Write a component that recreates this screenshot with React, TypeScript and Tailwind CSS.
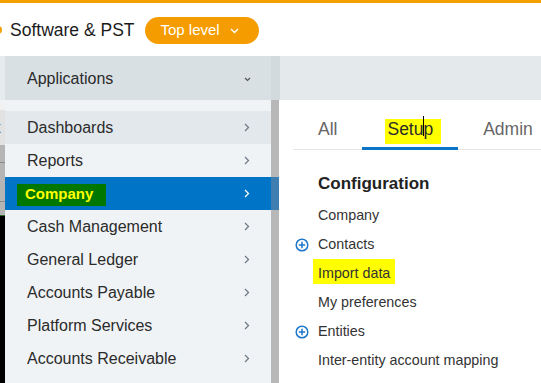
import React from "react";

const Chevron = ({ color = "#6f7b88" }: { color?: string }) => (
  <svg width="6" height="9" viewBox="0 0 6 9" className="block">
    <polyline points="1,1 4.5,4.5 1,8" fill="none" stroke={color} strokeWidth="1.3" />
  </svg>
);

const PlusCircle = () => (
  <svg width="14" height="14" viewBox="0 0 14 14" className="block">
    <circle cx="7" cy="7" r="5.8" fill="none" stroke="#1e76c8" strokeWidth="1.5" />
    <line x1="7" y1="3.8" x2="7" y2="10.2" stroke="#1e76c8" strokeWidth="1.5" />
    <line x1="3.8" y1="7" x2="10.2" y2="7" stroke="#1e76c8" strokeWidth="1.5" />
  </svg>
);

const menu = [
  "Dashboards",
  "Reports",
  "Company",
  "Cash Management",
  "General Ledger",
  "Accounts Payable",
  "Platform Services",
  "Accounts Receivable",
];

const items: { label: string; plus?: boolean; hl?: boolean }[] = [
  { label: "Company" },
  { label: "Contacts", plus: true },
  { label: "Import data", hl: true },
  { label: "My preferences" },
  { label: "Entities", plus: true },
  { label: "Inter-entity account mapping" },
];

export default function App() {
  return (
    <div
      className="w-[541px] h-[383px] overflow-hidden bg-white flex flex-col"
      style={{ fontFamily: '"Liberation Sans", Arial, sans-serif' }}
    >
      <div className="h-[3px] bg-[#f5a000] shrink-0" />
      {/* header */}
      <div className="h-[53px] shrink-0 flex items-center relative pt-[2px]">
        <div className="absolute left-[-6px] top-[23px] w-[8px] h-[8px] rounded-full bg-[#f5a000]" />
        <span className="ml-[10px] text-[17.5px] text-[#1b1b1b] leading-none">Software &amp; PST</span>
        <div className="ml-[10px] h-[27px] w-[114px] shrink-0 rounded-full bg-[#f59c00] flex items-center pl-[16px] text-white text-[15px]">
          <span>Top level</span>
          <svg width="9" height="6" viewBox="0 0 9 6" className="ml-[10px] block">
            <polyline points="1,1 4.5,4.5 8,1" fill="none" stroke="#fff" strokeWidth="1.4" />
          </svg>
        </div>
      </div>
      {/* band */}
      <div className="h-[44px] shrink-0 flex">
        <div className="w-[5px] shrink-0 bg-[#e6ebee]" />
        <div className="w-[266px] shrink-0 bg-[#d9e0e4] flex items-center justify-between pl-[22px] pr-[20px] pt-[2px]">
          <span className="text-[16px] text-[#2a2a2a]">Applications</span>
          <svg width="7" height="5" viewBox="0 0 7 5" className="block">
            <polyline points="1,1 3.5,3.5 6,1" fill="none" stroke="#555" strokeWidth="1.2" />
          </svg>
        </div>
        <div className="w-[9px] shrink-0 bg-[#d3dadd]" />
        <div className="flex-1 bg-[#e4e9ec]" />
      </div>
      {/* main */}
      <div className="flex-1 flex min-h-0">
        <div className="w-[5px] shrink-0 flex flex-col">
          <div className="h-[10px] bg-[#eff1f2]" />
          <div className="h-[35px] bg-[#e2e2e2] relative overflow-hidden">
            <span className="absolute left-[-4px] top-[10px] text-[16px] leading-none text-black">t</span>
          </div>
          <div className="h-[18px] bg-[#b5b5b5] border-b border-[#8a8a8a]" />
          <div className="h-[39px] bg-[#b5b5b5] border-b border-[#8a8a8a]" />
          <div className="h-[14px] bg-[#b5b5b5] border-b border-[#2f6b2f]" />
          <div className="flex-1 bg-black" />
        </div>
        <div className="w-[266px] shrink-0 bg-[#f0f3f5] pt-[11px]">
          {menu.map((m) => {
            const active = m === "Company";
            const hover = m === "Dashboards";
            return (
              <div
                key={m}
                className={`h-[33px] flex items-center justify-between pr-[21px] ${
                  active ? "bg-[#0074c7] pl-[12px]" : hover ? "bg-[#e2e8eb] pl-[22px]" : "pl-[22px]"
                }`}
              >
                {active ? (
                  <span className="bg-[#007800] text-[#ffff00] text-[15px] font-bold h-[22px] w-[89px] flex items-center pl-[8px] mt-[2px]">
                    Company
                  </span>
                ) : (
                  <span className="text-[16px] text-[#2b2b2b]">{m}</span>
                )}
                <Chevron color={active ? "#ffffff" : "#6f7b88"} />
              </div>
            );
          })}
        </div>
        <div className="w-[8px] shrink-0 flex flex-col">
          <div className="h-[77px] bg-[#b8b8b8]" />
          <div className="h-[33px] bg-[#3f7eb1]" />
          <div className="flex-1 bg-[#b8b8b8]" />
        </div>
        <div className="flex-1 min-w-0 pl-[14px] bg-white overflow-hidden">
          <div className="flex border-b border-[#e4e4e4] h-[50px]">
            {["All", "Setup", "Admin"].map((t) => {
              const active = t === "Setup";
              return (
                <div
                  key={t}
                  className={`h-[50px] shrink-0 -mb-px pt-[11px] px-[25px] flex items-center text-[17.5px] border-b-[3px] ${
                    active ? "border-[#0a74c9] text-[#2b2b2b]" : "border-transparent text-[#666]"
                  }`}
                >
                  {active ? (
                    <span className="relative">
                      <span className="absolute left-[-2px] top-[3px] w-[56px] h-[25px] bg-[#ffff00]" />
                      <span className="relative">Setup</span>
                      <span className="absolute left-[36px] top-[0px] w-px h-[20px] bg-black" />
                    </span>
                  ) : (
                    <span>{t}</span>
                  )}
                </div>
              );
            })}
          </div>
          <div className="pl-[25px] mt-[24px] text-[17px] font-bold text-[#222] leading-[20px]">Configuration</div>
          <div className="mt-[7px]">
            {items.map((it) => (
              <div key={it.label} className="h-[29px] relative flex items-center pl-[25px] text-[14.3px] text-[#333]">
                {it.plus && (
                  <div className="absolute left-[2px] top-[8px]">
                    <PlusCircle />
                  </div>
                )}
                {it.hl ? (
                  <span className="relative">
                    <span className="absolute left-[-5px] top-[-4px] w-[82px] h-[25px] bg-[#ffff00]" />
                    <span className="relative">{it.label}</span>
                  </span>
                ) : (
                  <span>{it.label}</span>
                )}
              </div>
            ))}
          </div>
        </div>
      </div>
    </div>
  );
}
